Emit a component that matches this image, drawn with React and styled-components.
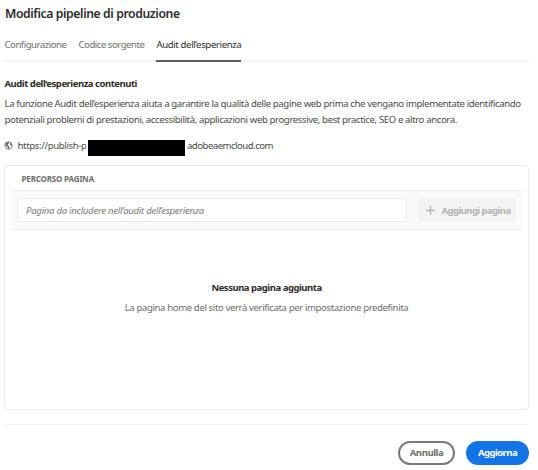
import React from 'react';
import styled, { createGlobalStyle } from 'styled-components';

const GlobalStyle = createGlobalStyle`
  * { box-sizing: border-box; }
  body {
    margin: 0;
    background: #fff;
    color: #4b4b4b;
    font-family: "Noto Sans", sans-serif;
    font-size: 9.6px;
    letter-spacing: -0.385px;
    white-space: nowrap;
  }
`;

const Page = styled.main`
  display: flex;
  flex-direction: column;
  width: 538px;
  height: 470px;
  padding: 5px 9px 0 4px;
  overflow: hidden;
`;

const Title = styled.h1`
  margin: 0;
  padding-left: 1px;
  font-size: 12.2px;
  line-height: 17px;
  font-weight: 600;
  letter-spacing: -0.39px;
  color: #2c2c2c;
`;

const TabList = styled.nav`
  display: flex;
  gap: 12px;
  height: 26px;
  margin-top: 14px;
  padding-left: 0.5px;
  border-bottom: 2px solid #f4f4f4;
`;

const Tab = styled.a`
  height: 26px;
  line-height: 17px;
  letter-spacing: ${(p) => p.$tracking}px;
  color: ${(p) => (p.$active ? '#2c2c2c' : '#6e6e6e')};
  border-bottom: 2px solid ${(p) => (p.$active ? '#5e5e5e' : 'transparent')};
`;

const Heading = styled.h2`
  margin: 0;
  padding-left: ${(p) => p.$indent || 0}px;
  font-size: 9.5px;
  line-height: 15px;
  font-weight: 700;
  letter-spacing: -0.47px;
  color: #2c2c2c;
`;

const Intro = styled.section`
  margin-top: 14px;
`;

const Description = styled.p`
  margin: 5px 0 0;
  padding-left: 0.5px;
  line-height: 15.5px;
`;

const UrlRow = styled.div`
  display: flex;
  align-items: center;
  height: 17px;
  margin-top: 10px;
  line-height: 15px;
`;

const UrlStart = styled.span`
  width: 68.5px;
  margin-left: 4.5px;
  overflow: hidden;
  letter-spacing: -0.36px;
`;

const Redaction = styled.span`
  width: 97px;
  height: 16px;
  margin: 4px 2px 0;
  background: #000;
`;

const UrlEnd = styled.span`
  letter-spacing: -0.52px;
`;

const Panel = styled.section`
  display: flex;
  flex-direction: column;
  height: 245px;
  margin-top: 11px;
  padding: 0 6px;
  border: 1px solid #ececec;
  border-radius: 4px;
`;

const ColumnHeader = styled.div`
  height: 24px;
  padding: 6px 0 0 10.5px;
  font-size: 8px;
  line-height: 13px;
  font-weight: 700;
  letter-spacing: -0.16px;
  color: #6e6e6e;
`;

const AddRow = styled.div`
  display: flex;
  align-items: center;
  justify-content: space-between;
  height: 40px;
  padding: 0 6px 0 6px;
  background: #fafafa;
  border-top: 1px solid #efefef;
  border-bottom: 1px solid #efefef;
`;

const PathInput = styled.input`
  width: 390px;
  height: 24px;
  padding: 0 8px;
  border: 1px solid #eaeaea;
  border-radius: 3px;
  background: #fff;
  font: italic 9.6px "Noto Sans", sans-serif;
  letter-spacing: -0.28px;
  &::placeholder {
    color: #7c7c7c;
    opacity: 1;
  }
`;

const AddButton = styled.button`
  display: flex;
  align-items: center;
  gap: 6.5px;
  width: 98px;
  height: 24px;
  padding: 1px 0 0 8px;
  border: 0;
  border-radius: 4px;
  background: #f3f3f3;
  color: #b3b3b3;
  font: 700 9.5px "Noto Sans", sans-serif;
  letter-spacing: -0.56px;
`;

const EmptyState = styled.div`
  display: flex;
  flex-direction: column;
  align-items: center;
  gap: 5px;
  padding-top: 50px;
`;

const EmptyText = styled.p`
  margin: 0;
  line-height: 15px;
  color: #6e6e6e;
`;

const Footer = styled.footer`
  display: flex;
  justify-content: flex-end;
  gap: 11px;
  margin-top: 14px;
  padding-top: 16px;
  border-top: 1px solid #f3f3f3;
`;

const PillButton = styled.button`
  width: ${(p) => (p.$primary ? 63 : 57)}px;
  height: 24px;
  padding: 0;
  border: 2px solid ${(p) => (p.$primary ? '#1473e6' : '#7a7a7a')};
  border-radius: 12px;
  background: ${(p) => (p.$primary ? '#1473e6' : '#fff')};
  color: ${(p) => (p.$primary ? '#fff' : '#6e6e6e')};
  font: 700 9.6px/20px "Noto Sans", sans-serif;
  letter-spacing: ${(p) => (p.$primary ? -0.6 : -0.45)}px;
`;

const GlobeIcon = () => (
  <svg width="9" height="9" viewBox="0 0 18 18" aria-hidden="true">
    <circle cx="9" cy="9" r="7.5" fill="none" stroke="#6e6e6e" strokeWidth="1.5" />
    <path
      d="M2 6 4.5 2.8 9 1.5 10.5 4 8 6.5 7 8.5 10 10 11.5 12 9.5 16 8 16.5 7.5 13 4.5 10.5ZM12 3.5 15.5 6 16 10 13.5 9 11.5 6.5Z"
      fill="#6e6e6e"
    />
  </svg>
);

const PlusIcon = () => (
  <svg width="9" height="9" viewBox="0 0 9 9" aria-hidden="true">
    <path d="M4.5 0v9M0 4.5h9" stroke="#b3b3b3" strokeWidth="1.3" />
  </svg>
);

export default function App() {
  return (
    <>
      <GlobalStyle />
      <Page>
        <Title>Modifica pipeline di produzione</Title>
        <TabList>
          <Tab $tracking={-0.48}>Configurazione</Tab>
          <Tab $tracking={-0.48}>Codice sorgente</Tab>
          <Tab $tracking={-0.37} $active>Audit dell’esperienza</Tab>
        </TabList>
        <Intro>
          <Heading $indent={0.5}>Audit dell’esperienza contenuti</Heading>
          <Description>
            La funzione Audit dell’esperienza aiuta a garantire la qualità delle pagine web prima che vengano implementate identificando
            <br />
            potenziali problemi di prestazioni, accessibilità, applicazioni web progressive, best practice, SEO e altro ancora.
          </Description>
        </Intro>
        <UrlRow>
          <GlobeIcon />
          <UrlStart>https://publish-p</UrlStart>
          <Redaction />
          <UrlEnd>adobeaemcloud.com</UrlEnd>
        </UrlRow>
        <Panel>
          <ColumnHeader>PERCORSO PAGINA</ColumnHeader>
          <AddRow>
            <PathInput placeholder="Pagina da includere nell’audit dell’esperienza" />
            <AddButton>
              <PlusIcon />
              Aggiungi pagina
            </AddButton>
          </AddRow>
          <EmptyState>
            <Heading>Nessuna pagina aggiunta</Heading>
            <EmptyText>La pagina home del sito verrà verificata per impostazione predefinita</EmptyText>
          </EmptyState>
        </Panel>
        <Footer>
          <PillButton>Annulla</PillButton>
          <PillButton $primary>Aggiorna</PillButton>
        </Footer>
      </Page>
    </>
  );
}
